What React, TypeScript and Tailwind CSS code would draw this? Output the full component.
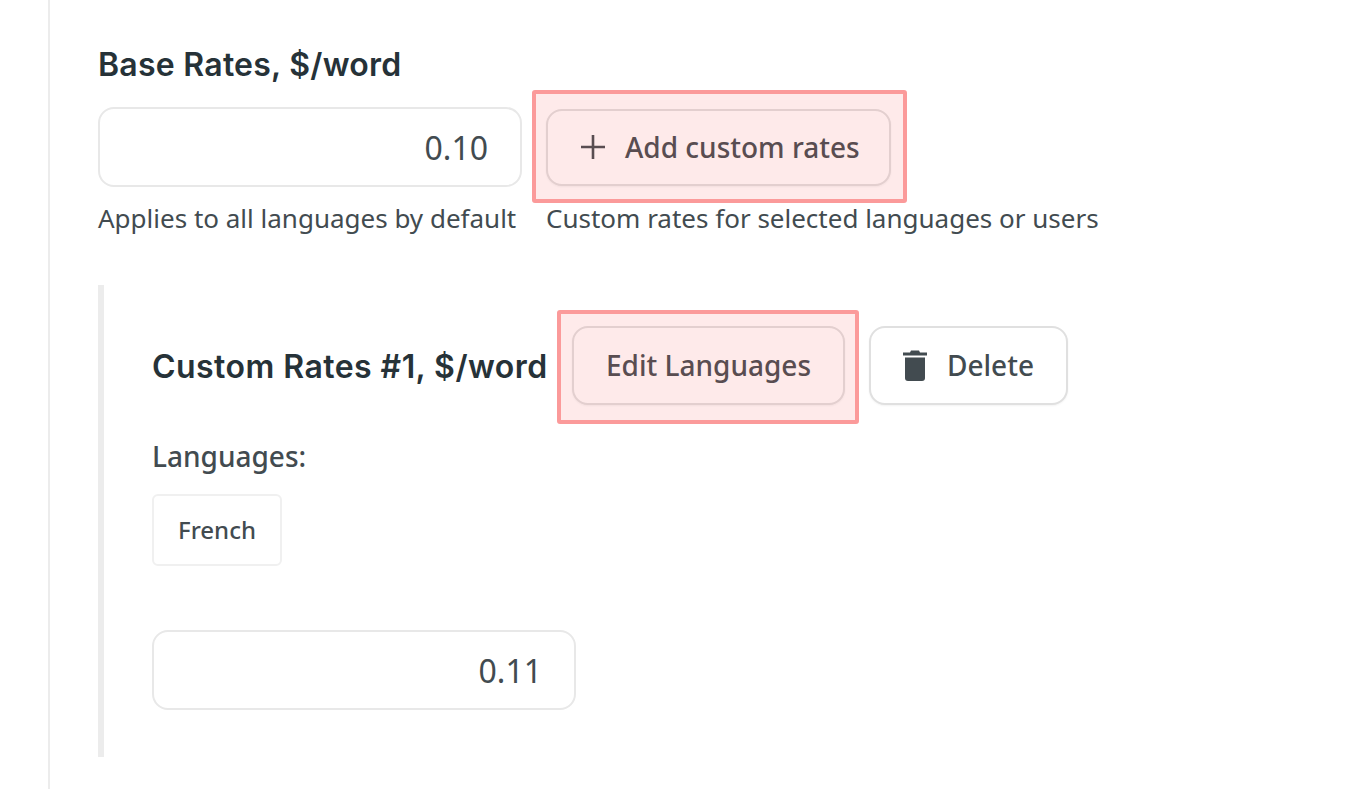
import { ReactNode } from "react";

const sans = "font-['Noto_Sans',sans-serif]";
const heading = "font-['Inter',sans-serif] text-[32px] font-semibold leading-[40px] text-[#263238] whitespace-nowrap";
const button = "rounded-[16px] border-2 border-[#e0e0e0] bg-white shadow-[0_1px_2px_rgba(0,0,0,0.05)] flex items-center text-[28px] font-medium text-[#424b50] whitespace-nowrap";
const field = "w-[424px] h-[80px] rounded-[16px] border-2 border-[#e8e8e8] bg-white flex items-center justify-end pr-[32px] pt-[2px] text-[32px] text-[#424b50]";
const hint = "text-[26px] leading-[33px] text-[#424b50] whitespace-nowrap";

// pink annotation drawn over a button
function Highlight({ children, className }: { children: ReactNode; className: string }) {
  return (
    <div className="relative w-fit">
      {children}
      <div className={`absolute border-[4px] border-[#fb9a9a] bg-[#fa5a5a]/[0.13] rounded-[3px] ${className}`} />
    </div>
  );
}

function TrashIcon() {
  return (
    <svg width="24" height="32" viewBox="0 0 24 32" fill="#424b50">
      <path d="M8 1.5h8l1 2h7v3H0v-3h7z" />
      <path d="M2 8.5h20v20.5a3 3 0 0 1-3 3H5a3 3 0 0 1-3-3z" />
    </svg>
  );
}

function PlusIcon() {
  return (
    <svg width="26" height="26" viewBox="0 0 26 26" stroke="#424b50" strokeWidth="2.6" fill="none">
      <path d="M13 1v24M1 13h24" />
    </svg>
  );
}

export default function App() {
  return (
    <div className={`min-h-[789px] bg-white ${sans} overflow-hidden`}>
      <div className="ml-[48px] min-h-[789px] border-l-2 border-[#ececec] pl-[48px] pt-[45px]">

        {/* Base rates */}
        <h2 className={`${heading} tracking-[0.25px]`}>Base Rates, $/word</h2>
        <div className="mt-[22px] flex gap-[24px]">
          <div className="w-[424px]">
            <div className={field}>0.10</div>
            <p className={`mt-[15px] ${hint}`}>Applies to all languages by default</p>
          </div>
          <div className="pt-[2px]">
            <Highlight className="-left-[14px] -right-[16px] -top-[19px] -bottom-[17px]">
              <div className={`${button} h-[77px] w-[345px] pl-[32px] gap-[19px] pb-[2px]`}>
                <PlusIcon />
                Add custom rates
              </div>
            </Highlight>
            <p className={`mt-[16px] ${hint}`}>Custom rates for selected languages or users</p>
          </div>
        </div>

        {/* Custom rates */}
        <div className="mt-[50px] h-[472px] border-l-[6px] border-[#ececec] pl-[48px] pt-[41px]">
          <div className="flex items-center">
            <h3 className={`${heading} w-[394px] tracking-[0.45px] pt-[2px]`}>Custom Rates #1, $/word</h3>
            <div className="ml-[26px]">
              <Highlight className="-left-[15px] -right-[14px] -top-[16px] -bottom-[19px]">
                <div className={`${button} h-[79px] w-[273px] justify-center pb-[2px]`}>Edit Languages</div>
              </Highlight>
            </div>
            <div className={`${button} h-[79px] ml-[24px] w-[199px] justify-center gap-[20px] pb-[2px]`}>
              <TrashIcon />
              Delete
            </div>
          </div>
          <p className="mt-[33px] text-[28px] font-medium leading-[36px] text-[#424b50]">Languages:</p>
          <div className="mt-[20px] w-[130px] h-[72px] rounded-[6px] border-2 border-[#f0f0f0] flex items-center justify-center text-[24px] font-medium text-[#424b50]">French</div>
          <div className={`${field} mt-[64px]`}>0.11</div>
        </div>

      </div>
    </div>
  );
}
